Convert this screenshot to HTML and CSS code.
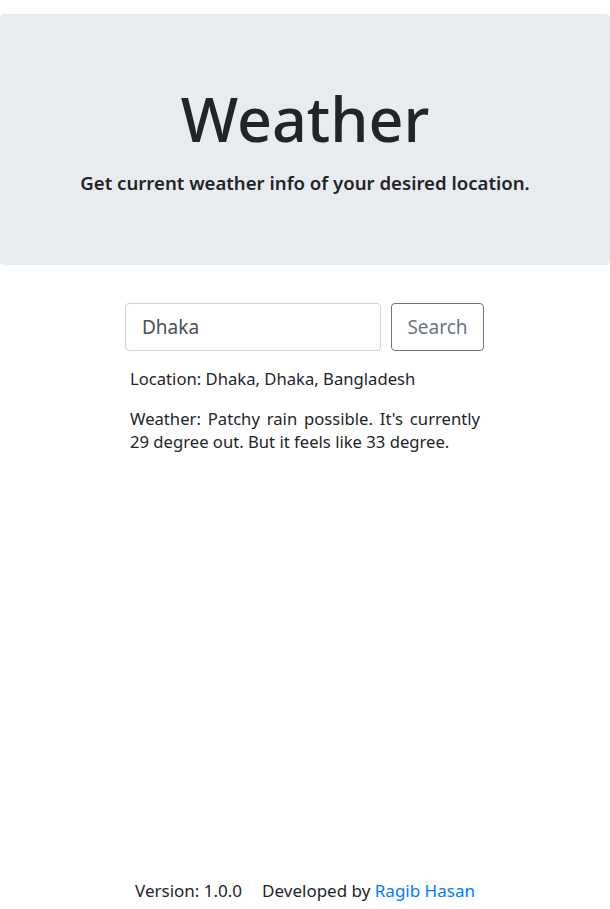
FILE: index.html
```html
<!DOCTYPE html>
<html lang="en">
<head>
<meta charset="utf-8">
<title>Weather</title>
<link rel="stylesheet" href="styles.css">
</head>
<body>
<header class="jumbotron">
  <h1 class="title">Weather</h1>
  <p class="lead">Get current weather info of your desired location.</p>
</header>
<main class="content">
  <form class="search">
    <input class="search-input" type="text" value="Dhaka">
    <button class="search-btn" type="button">Search</button>
  </form>
  <div class="result">
    <p class="result-line">Location: Dhaka, Dhaka, Bangladesh</p>
    <p class="result-line">Weather: Patchy rain possible. It's currently 29 degree out. But it feels like 33 degree.</p>
  </div>
</main>
<footer class="footer">
  <span class="version">Version: 1.0.0</span>
  <span class="credit">Developed by <a class="author" href="#">Ragib Hasan</a></span>
</footer>
</body>
</html>
```
FILE: styles.css
```css
html, body {
  margin: 0;
  padding: 0;
  height: 100%;
}
body {
  font-family: "Noto Sans", "Open Sans", sans-serif;
  color: #212529;
  background: #fff;
  display: flex;
  flex-direction: column;
  font-size: 16.65px;
  line-height: 24px;
}
.jumbotron {
  margin-top: 14px;
  height: 251px;
  box-sizing: border-box;
  background: #e9ecef;
  border-radius: 4px;
  display: flex;
  flex-direction: column;
  align-items: center;
  padding-top: 70px;
}
.title {
  margin: 0;
  font-size: 61px;
  font-weight: 500;
  line-height: 70px;
  color: #212529;
}
.lead {
  margin: 16px 0 0;
  font-size: 18.6px;
  font-weight: 600;
  line-height: 26px;
}
.content {
  flex: 1;
  display: flex;
  flex-direction: column;
  align-items: center;
  padding-top: 38px;
}
.search {
  display: flex;
  gap: 10px;
  margin: 0 1px 0 0;
}
.search-input {
  width: 256px;
  height: 48px;
  box-sizing: border-box;
  border: 1px solid #ced4da;
  border-radius: 4px;
  padding: 0 16px;
  font-family: inherit;
  font-size: 19px;
  color: #495057;
  background: #fff;
  outline: none;
}
.search-btn {
  width: 93px;
  height: 48px;
  box-sizing: border-box;
  border: 1px solid #6c757d;
  border-radius: 4px;
  background: #fff;
  color: #6c757d;
  font-family: inherit;
  font-size: 19px;
  padding: 0;
}
.result {
  width: 350px;
  margin-top: 16px;
}
.result-line {
  margin: 0 0 17px;
  text-align: justify;
  line-height: 23px;
}
.footer {
  display: flex;
  justify-content: center;
  gap: 20px;
  padding-bottom: 6px;
  line-height: 24px;
  font-size: 17px;
}
.author {
  color: #007bff;
  text-decoration: none;
}
```
